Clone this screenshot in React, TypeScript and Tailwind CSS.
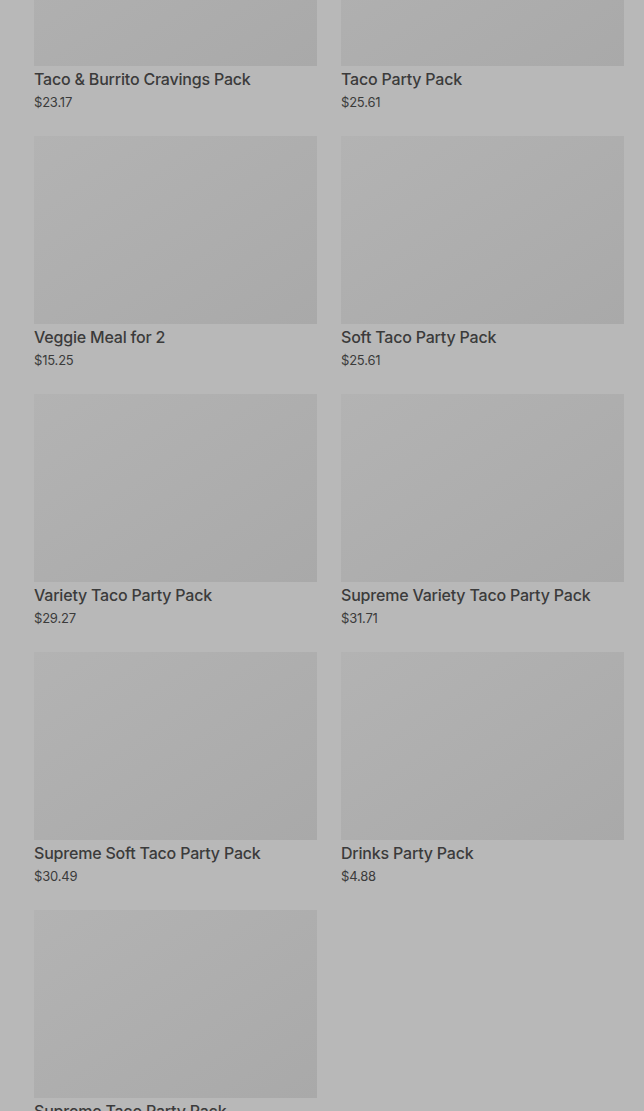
import React from "react";

const products = [
  { name: "Taco & Burrito Cravings Pack", price: "$23.17" },
  { name: "Taco Party Pack", price: "$25.61" },
  { name: "Veggie Meal for 2", price: "$15.25" },
  { name: "Soft Taco Party Pack", price: "$25.61" },
  { name: "Variety Taco Party Pack", price: "$29.27" },
  { name: "Supreme Variety Taco Party Pack", price: "$31.71" },
  { name: "Supreme Soft Taco Party Pack", price: "$30.49" },
  { name: "Drinks Party Pack", price: "$4.88" },
  { name: "Supreme Taco Party Pack", price: "$28.05" },
];

const App = () => {
  return (
    <div className="h-[1111px] overflow-hidden bg-[#b8b8b8] font-['Inter',sans-serif] text-[#3b3b3b]">
      {/* Product grid, scrolled part way down */}
      <div className="-mt-[122px] grid grid-cols-2 gap-x-6 gap-y-[25px] pl-[34px] pr-5">
        {products.map((p, i) => (
          <div key={i} className="flex flex-col">
            <div className="h-[188px] bg-gradient-to-br from-[#b3b3b3] to-[#a9a9a9]" />
            <p className="mt-[3px] text-[16px] leading-5 font-medium tracking-[-0.2px]">
              {p.name}
            </p>
            <p className="mt-1 text-[13px] leading-[18px] tracking-[-0.2px]">{p.price}</p>
          </div>
        ))}
      </div>
    </div>
  );
};

export default App;
